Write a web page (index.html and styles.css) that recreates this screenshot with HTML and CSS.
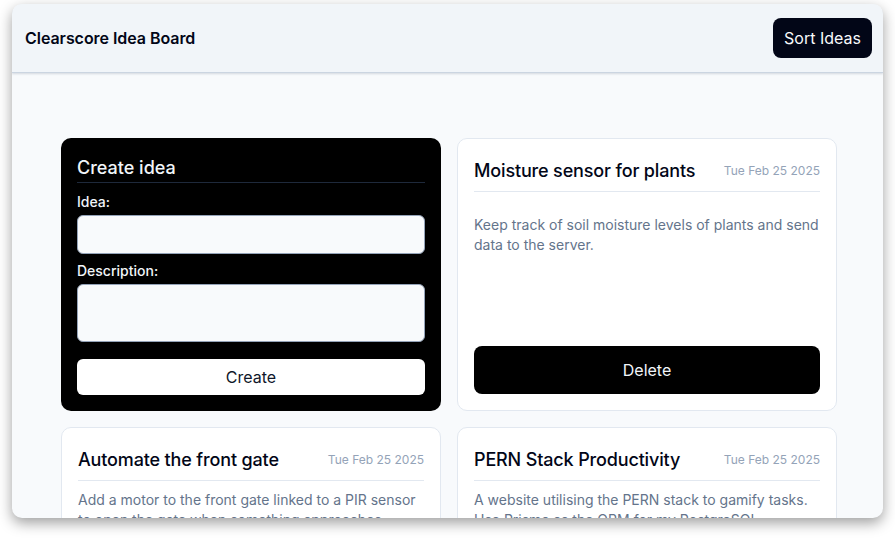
FILE: index.html
```html
<!DOCTYPE html>
<html lang="en">
<head>
<meta charset="utf-8">
<title>Clearscore Idea Board</title>
<link rel="stylesheet" href="styles.css">
</head>
<body>
<div class="window">
  <header class="topbar">
    <h1 class="brand">Clearscore Idea Board</h1>
    <button class="sort-btn">Sort Ideas</button>
  </header>
  <main class="content">
    <div class="grid">
      <form class="create-card">
        <h2 class="create-title">Create idea</h2>
        <label class="field-label" for="idea">Idea:</label>
        <input class="field-input" id="idea" type="text">
        <label class="field-label field-label--gap" for="desc">Description:</label>
        <textarea class="field-textarea" id="desc"></textarea>
        <button type="button" class="create-btn">Create</button>
      </form>

      <article class="card card--tall">
        <div class="card-head">
          <h3 class="card-title">Moisture sensor for plants</h3>
          <span class="card-date">Tue Feb 25 2025</span>
        </div>
        <p class="card-desc">Keep track of soil moisture levels of plants and send data to the server.</p>
        <button class="delete-btn">Delete</button>
      </article>

      <article class="card">
        <div class="card-head">
          <h3 class="card-title">Automate the front gate</h3>
          <span class="card-date">Tue Feb 25 2025</span>
        </div>
        <p class="card-desc">Add a motor to the front gate linked to a PIR sensor to open the gate when something approaches.</p>
        <button class="delete-btn">Delete</button>
      </article>

      <article class="card">
        <div class="card-head">
          <h3 class="card-title">PERN Stack Productivity</h3>
          <span class="card-date">Tue Feb 25 2025</span>
        </div>
        <p class="card-desc">A website utilising the PERN stack to gamify tasks. Use Prisma as the ORM for my PostgreSQL database.</p>
        <button class="delete-btn">Delete</button>
      </article>
    </div>
  </main>
</div>
</body>
</html>
```
FILE: styles.css
```css
* { box-sizing: border-box; }
html, body { margin: 0; padding: 0; }
body {
  background: #ffffff;
  font-family: Inter, "Noto Sans", sans-serif;
  color: #020617;
  width: 895px;
  height: 538px;
  overflow: hidden;
}
.window {
  margin: 4px 12px 0 12px;
  width: 871px;
  height: 514px;
  border-radius: 10px;
  overflow: hidden;
  background: #f8fafc;
  box-shadow: 0 5px 14px rgba(0, 0, 0, 0.38);
  display: flex;
  flex-direction: column;
}
.topbar {
  height: 69px;
  flex: none;
  background: #f1f5f9;
  border-bottom: 1px solid #cbd5e1;
  box-shadow: 0 1px 2px rgba(100, 116, 139, 0.25);
  display: flex;
  align-items: center;
  justify-content: space-between;
  padding: 0 11px 0 13px;
  position: relative;
  z-index: 1;
}
.brand {
  margin: 0;
  font-size: 16px;
  font-weight: 600;
  letter-spacing: -0.05px;
  color: #020617;
}
.sort-btn {
  height: 40px;
  width: 99px;
  padding: 0;
  border: none;
  border-radius: 8px;
  background: #020617;
  color: #f8fafc;
  font-family: inherit;
  font-size: 16px;
}
.content {
  flex: 1;
  padding: 65px 46px 0 49px;
}
.grid {
  display: grid;
  grid-template-columns: 380px 380px;
  gap: 16px;
}
.create-card {
  background: #000;
  border-radius: 10px;
  padding: 16px;
  display: flex;
  flex-direction: column;
  color: #f1f5f9;
}
.create-title {
  margin: 0 0 9px;
  font-size: 18px;
  font-weight: 500;
  line-height: 28px;
  border-bottom: 1px solid #1e293b;
}
.field-label {
  font-size: 14px;
  line-height: 20px;
  font-weight: 500;
  margin-bottom: 3px;
}
.field-label--gap { margin-top: 7px; }
.field-input, .field-textarea {
  display: block;
  width: 100%;
  background: #f8fafc;
  border: 1px solid #94a3b8;
  border-radius: 6px;
  font-family: inherit;
}
.field-input { height: 39px; }
.field-textarea { height: 58px; resize: none; }
.create-btn {
  margin-top: 17px;
  height: 36px;
  border: none;
  border-radius: 6px;
  background: #ffffff;
  color: #0f172a;
  font-family: inherit;
  font-size: 16px;
}
.card {
  background: #ffffff;
  border: 1px solid #e2e8f0;
  border-radius: 10px;
  padding: 18px 16px 16px;
  display: flex;
  flex-direction: column;
}
.card-head {
  display: flex;
  justify-content: space-between;
  align-items: center;
  padding-bottom: 7px;
  border-bottom: 1px solid #e2e8f0;
}
.card-title {
  margin: 0;
  font-size: 18px;
  font-weight: 500;
  letter-spacing: -0.15px;
  line-height: 27px;
  color: #020617;
}
.card-date {
  font-size: 12px;
  color: #94a3b8;
}
.card-desc {
  margin: 9px 0 0;
  font-size: 14px;
  line-height: 20px;
  color: #64748b;
  flex: 1;
}
.card--tall .card-desc { margin-top: 23px; }
.delete-btn {
  height: 48px;
  border: none;
  border-radius: 8px;
  background: #000;
  color: #f1f5f9;
  font-family: inherit;
  font-size: 16px;
  margin-top: 16px;
}
```
